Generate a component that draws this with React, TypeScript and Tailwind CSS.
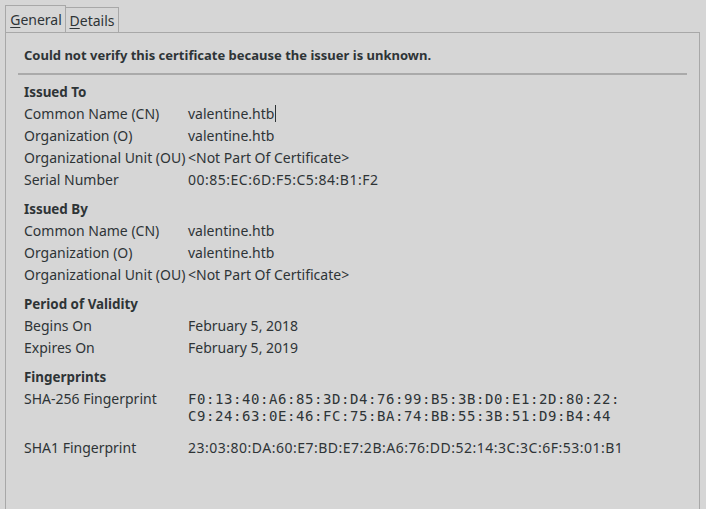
import React from "react";

const sans = { fontFamily: '"Noto Sans", "DejaVu Sans", sans-serif' };

function Row({ label, value, cursor, hex }: { label: string; value: string; cursor?: boolean; hex?: boolean }) {
  return (
    <div className="flex h-[22px] items-center">
      <div className="w-[164px] shrink-0 whitespace-nowrap">{label}</div>
      <div className={`whitespace-nowrap flex items-center ${hex ? "tracking-[0.5px]" : ""}`}>
        {value}
        {cursor && <span className="ml-[1px] inline-block h-[17px] w-[1px] bg-[#2e3436]" />}
      </div>
    </div>
  );
}

function Header({ children, top }: { children: React.ReactNode; top: string }) {
  return <div className={`flex h-[22px] pt-[2px] items-center font-bold text-[13.4px] ${top}`}>{children}</div>;
}

export default function App() {
  return (
    <div
      className="w-[706px] h-[509px] overflow-hidden bg-[#d6d6d6] text-[14px] text-[#2e3436]"
      style={sans}
    >
      <div className="flex pl-[5px] pt-[5px] h-[32px] items-end">
        <div className="h-[27px] w-[61px] border border-b-0 border-[#a8a8a8] flex items-center justify-center pl-[1px]">
          <span><span className="underline underline-offset-2">G</span>eneral</span>
        </div>
        <div className="h-[25px] w-[53px] border border-l-0 border-b-0 border-[#a8a8a8] flex items-center justify-center">
          <span><span className="underline underline-offset-2">D</span>etails</span>
        </div>
      </div>
      <div className="ml-[5px] mr-[6px] h-[477px] border border-b-0 border-[#a8a8a8] pt-[11px]">
        <div className="ml-[12px] mr-[12px]">
          <div className="flex h-[22px] pt-[2px] items-center font-bold text-[13px] pl-[6px]">
            Could not verify this certificate because the issuer is unknown.
          </div>
          <div className="mt-[7px] h-[2px] bg-[#aaaaaa]" />
          <div className="pl-[6px] mt-[5px]">
            <Header top="">Issued To</Header>
            <Row label="Common Name (CN)" value="valentine.htb" cursor />
            <Row label="Organization (O)" value="valentine.htb" />
            <Row label="Organizational Unit (OU)" value="<Not Part Of Certificate>" />
            <Row label="Serial Number" value="00:85:EC:6D:F5:C5:84:B1:F2" hex />

            <Header top="mt-[7px]">Issued By</Header>
            <Row label="Common Name (CN)" value="valentine.htb" />
            <Row label="Organization (O)" value="valentine.htb" />
            <Row label="Organizational Unit (OU)" value="<Not Part Of Certificate>" />

            <Header top="mt-[7px]">Period of Validity</Header>
            <Row label="Begins On" value="February 5, 2018" />
            <Row label="Expires On" value="February 5, 2019" />

            <Header top="mt-[7px]">Fingerprints</Header>
            <div className="flex items-start">
              <div className="w-[164px] shrink-0 h-[23px] flex items-center whitespace-nowrap">SHA-256 Fingerprint</div>
              <div
                className="pt-[4px] leading-[17px] text-[14px] tracking-[0.57px] whitespace-nowrap"
                style={{ fontFamily: '"DejaVu Sans Mono", monospace' }}
              >
                <div>F0:13:40:A6:85:3D:D4:76:99:B5:3B:D0:E1:2D:80:22:</div>
                <div>C9:24:63:0E:46:FC:75:BA:74:BB:55:3B:51:D9:B4:44</div>
              </div>
            </div>
            <div className="mt-[11px]">
              <Row label="SHA1 Fingerprint" value="23:03:80:DA:60:E7:BD:E7:2B:A6:76:DD:52:14:3C:3C:6F:53:01:B1" hex />
            </div>
          </div>
        </div>
      </div>
    </div>
  );
}
